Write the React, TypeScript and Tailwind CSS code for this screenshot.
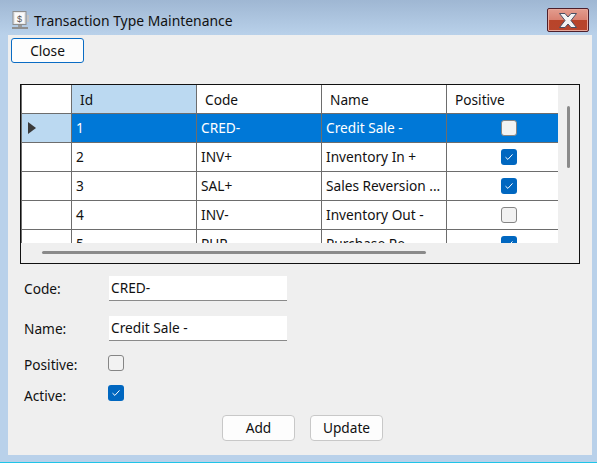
import React from "react";

const font = { fontFamily: '"Noto Sans", "Open Sans", sans-serif' };

function Box({ checked, onBlue }: { checked?: boolean; onBlue?: boolean }) {
  if (checked) {
    return (
      <span className="flex h-4 w-4 items-center justify-center rounded-[3px] bg-[#0067c0]">
        <svg width="10" height="8" viewBox="0 0 10 8" fill="none">
          <path d="M1.5 4.2 L3.9 6.4 L8.5 1.4" stroke="#ffffff" strokeWidth="1" />
        </svg>
      </span>
    );
  }
  return <span className={`block h-4 w-4 rounded-[3px] border border-[#858585] ${onBlue ? "bg-[#f3f3f3]" : "bg-[#f2f2f2]"}`} />;
}

const rows = [
  { id: "1", code: "CRED-", name: "Credit Sale -", pos: false, sel: true },
  { id: "2", code: "INV+", name: "Inventory In +", pos: true },
  { id: "3", code: "SAL+", name: "Sales Reversion ...", pos: true },
  { id: "4", code: "INV-", name: "Inventory Out -", pos: false },
  { id: "5", code: "PUR-", name: "Purchase Re", pos: true },
];

const cols = "grid grid-cols-[50px_125px_125px_125px_112px]";

function Row({ r }: { r: (typeof rows)[number] }) {
  const cell = `flex items-center border-b border-[#6d6d6d] pl-[4px] h-[29px] overflow-hidden whitespace-nowrap border-r ${r.sel ? "bg-[#0078d7] text-white" : "bg-white text-[#111]"}`;
  return (
    <div className={cols}>
      <div className={`flex h-[29px] items-center border-b border-r border-[#6d6d6d] pl-[6px] ${r.sel ? "bg-[#bbd9f1]" : "bg-white"}`}>
        {r.sel && (
          <svg width="8" height="12" viewBox="0 0 8 12">
            <path d="M0 0 L8 6 L0 12 Z" fill="#3a3a3a" />
          </svg>
        )}
      </div>
      <div className={cell}>{r.id}</div>
      <div className={cell}>{r.code}</div>
      <div className={cell}>{r.name}</div>
      <div className={`flex h-[29px] items-center justify-center border-b border-[#6d6d6d] pl-[11px] ${r.sel ? "bg-[#0078d7]" : "bg-white"}`}>
        <Box checked={r.pos} onBlue={r.sel} />
      </div>
    </div>
  );
}

function Head({ label, active }: { label: string; active?: boolean }) {
  return (
    <div className={`flex h-[29px] items-center border-b border-r border-[#6d6d6d] pt-[2px] pl-[8px] ${active ? "bg-[#bbd9f1]" : "bg-white"}`}>
      {label}
    </div>
  );
}

function Field({ label, value }: { label: string; value: string }) {
  return (
    <div className="flex items-center">
      <span className="w-[85px]">{label}</span>
      <div className="flex h-[25px] w-[178px] items-center border-b border-[#8a8a8a] bg-white pl-[2px]">{value}</div>
    </div>
  );
}

function Btn({ label, className }: { label: string; className: string }) {
  return (
    <button className={`flex w-[73px] items-center justify-center bg-[#fdfdfd] ${className}`}>{label}</button>
  );
}

export default function App() {
  return (
    <div
      style={font}
      className="flex h-[463px] w-[597px] flex-col overflow-hidden bg-[#b9d1ea] text-[13.7px] leading-none text-[#111]"
    >
      <div className="flex h-[35px] items-start bg-gradient-to-b from-[#9fb7d3] to-[#b9d1ea] pl-[11px] pr-[8px]">
        <svg className="mt-[10px]" width="19" height="20" viewBox="0 0 19 20">
          <rect x="2" y="1.5" width="13" height="13" fill="#e8e8e8" stroke="#8d8d8d" />
          <rect x="4" y="3" width="9" height="10" fill="#fafafa" />
          <rect x="16" y="5" width="2" height="7" fill="#c4c4c4" />
          <rect x="7" y="15" width="4" height="2" fill="#9a9a9a" />
          <rect x="1" y="17" width="16" height="2" fill="#8f8f8f" />
          <text x="8.5" y="11.5" fontSize="9" textAnchor="middle" fill="#555" fontFamily="Liberation Sans">$</text>
        </svg>
        <span className="mt-[14px] ml-[4px] text-[13.9px]">Transaction Type Maintenance</span>
        <div className="mt-[8px] ml-auto flex h-[24px] w-[42px] items-center justify-center rounded-[2px] border border-[#4d1f2b] bg-[linear-gradient(#e39c8e_0%,#d98272_48%,#b8442a_52%,#b8452c_100%)] shadow-[inset_0_0_0_1px_#e8a89b]">
          <svg width="20" height="17" viewBox="0 0 20 17">
            <path
              d="M1.5 1.5 L7 1.5 L10 5 L13 1.5 L18.5 1.5 L13 8.5 L18.5 15.5 L13 15.5 L10 12 L7 15.5 L1.5 15.5 L7 8.5 Z"
              fill="#f3f3f3"
              stroke="#4a4f63"
              strokeWidth="1"
              strokeLinejoin="round"
            />
          </svg>
        </div>
      </div>

      <div className="mx-[8px] mr-[5px] flex h-[420px] flex-col bg-[#efefef] pl-[3px]">
        <Btn label="Close" className="mt-[3px] h-[25px] rounded-[3px] border border-[#0a6cc4]" />

        <div className="mt-[21px] ml-[9px] flex h-[180px] w-[560px] border border-[#111]">
          <div className="flex w-[537px] flex-col">
            <div className="h-[158px] overflow-hidden border-l border-[#6d6d6d] bg-white">
              <div className={cols}>
                <Head label="" />
                <Head label="Id" active />
                <Head label="Code" />
                <Head label="Name" />
                <div className="flex h-[29px] items-center border-b border-[#6d6d6d] pt-[2px] pl-[8px]">Positive</div>
              </div>
              {rows.map((r) => (
                <Row key={r.id} r={r} />
              ))}
            </div>
            <div className="pt-[8px] pl-[21px]">
              <div className="h-[3px] w-[384px] rounded-full bg-[#8a8a8a]" />
            </div>
          </div>
          <div className="pt-[21px] pl-[9px]">
            <div className="h-[62px] w-[3px] rounded-full bg-[#8a8a8a]" />
          </div>
        </div>

        <div className="mt-[12px] ml-[13px] flex flex-col">
          <Field label="Code:" value="CRED-" />
          <div className="mt-[15px]">
            <Field label="Name:" value="Credit Sale -" />
          </div>
          <div className="mt-[14px] flex h-[16px] items-center">
            <span className="w-[84px] pt-[4px]">Positive:</span>
            <Box />
          </div>
          <div className="mt-[14px] flex h-[16px] items-center">
            <span className="w-[84px] pt-[5px]">Active:</span>
            <Box checked />
          </div>
        </div>

        <div className="mt-[14px] ml-[211px] flex gap-[15px]">
          <Btn label="Add" className="h-[26px] rounded-[4px] border border-[#c8c8c8]" />
          <Btn label="Update" className="h-[26px] rounded-[4px] border border-[#c8c8c8]" />
        </div>
      </div>

      <div className="mt-auto h-px bg-[#1fc4e8]" />
    </div>
  );
}
